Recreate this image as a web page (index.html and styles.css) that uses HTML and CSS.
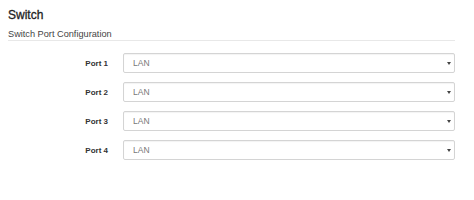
FILE: index.html
```html
<!DOCTYPE html>
<html lang="en">
<head>
  <meta charset="UTF-8">
  <meta name="viewport" content="width=device-width, initial-scale=1.0">
  <title>Switch</title>
  <link rel="stylesheet" href="styles.css">
</head>
<body>
  <div class="page">
    <h2 class="page-title">Switch</h2>
    <div class="section-title">Switch Port Configuration</div>

    <form class="port-form">
      <label class="port-label" for="port1">Port 1</label>
      <div class="select-wrap">
        <select class="port-select" id="port1">
          <option>LAN</option>
          <option>WAN</option>
        </select>
      </div>

      <label class="port-label" for="port2">Port 2</label>
      <div class="select-wrap">
        <select class="port-select" id="port2">
          <option>LAN</option>
          <option>WAN</option>
        </select>
      </div>

      <label class="port-label" for="port3">Port 3</label>
      <div class="select-wrap">
        <select class="port-select" id="port3">
          <option>LAN</option>
          <option>WAN</option>
        </select>
      </div>

      <label class="port-label" for="port4">Port 4</label>
      <div class="select-wrap">
        <select class="port-select" id="port4">
          <option>LAN</option>
          <option>WAN</option>
        </select>
      </div>
    </form>
  </div>
</body>
</html>
```

FILE: styles.css
```css
body {
  margin: 0;
  padding: 0;
  font-family: "Liberation Sans", Arial, sans-serif;
  background-color: #ffffff;
  color: #333333;
}

.page {
  padding: 6px 19px 0 8px;
}

.page-title {
  margin: 0;
  font-size: 12px;
  line-height: 18px;
  font-weight: normal;
  color: #222222;
  -webkit-text-stroke: 0.3px #222222;
}

.section-title {
  margin-top: 4px;
  font-size: 9.2px;
  line-height: 12px;
  color: #444444;
  border-bottom: 1px solid #e8e8e8;
}

.port-form {
  display: grid;
  grid-template-columns: 100px 1fr;
  column-gap: 15px;
  row-gap: 9px;
  margin-top: 12px;
  align-items: center;
}

.port-label {
  text-align: right;
  font-size: 8px;
  font-weight: bold;
  color: #333333;
}

.select-wrap {
  position: relative;
}

/* small down arrow on the right of each select */
.select-wrap::after {
  content: "";
  position: absolute;
  right: 4px;
  top: 9px;
  border-left: 2px solid transparent;
  border-right: 2px solid transparent;
  border-top: 3px solid #444444;
  pointer-events: none;
}

.port-select {
  -webkit-appearance: none;
  appearance: none;
  display: block;
  width: 100%;
  height: 20px;
  padding: 0 20px 0 9px;
  font-family: "Liberation Sans", Arial, sans-serif;
  font-size: 8.5px;
  color: #777777;
  background-color: #ffffff;
  border: 1px solid #d4d4d4;
  border-radius: 2px;
  box-shadow: inset 0 1px 1px rgba(0, 0, 0, 0.05);
}
```
